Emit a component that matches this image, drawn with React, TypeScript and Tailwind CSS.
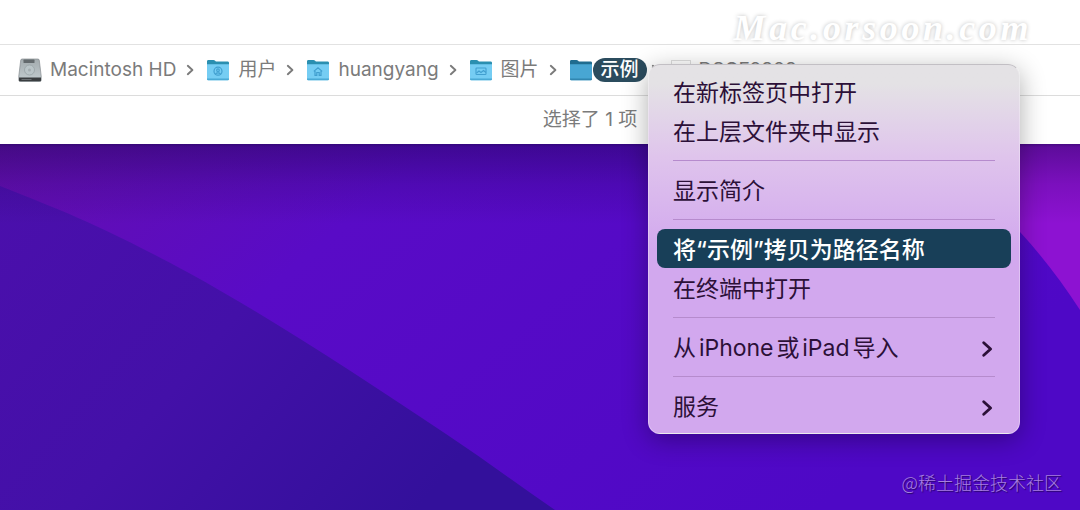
import { useId } from 'react';
import type { ReactNode } from 'react';

type FolderKind = 'users' | 'home' | 'pictures' | 'plain';

interface Crumb {
  label: string;
  icon: ReactNode;
  selected?: boolean;
}

interface MenuEntry {
  label: string;
  active?: boolean;
  submenu?: boolean;
}

function DriveIcon() {
  const id = useId();
  return (
    <svg width="24" height="24" viewBox="0 0 24 24" aria-hidden="true">
      <defs>
        <linearGradient id={id} x1="0" y1="0" x2="0" y2="1">
          <stop offset="0" stopColor="#a3abae" />
          <stop offset="1" stopColor="#c3cdd0" />
        </linearGradient>
      </defs>
      <path d="M4.200 1h15.600c.9 0 1.400.5 1.500 1.300L23.200 18v4.200c0 .8-.6 1.300-1.400 1.300H2.200C1.400 23.500.8 23 .8 22.200V18L2.700 2.300C2.800 1.500 3.300 1 4.200 1z" fill={`url(#${id})`} stroke="#868d90" strokeWidth=".7" />
      <path d="M1 19.600h22v2.600c0 .7-.4 1.100-1.100 1.100H2.100c-.7 0-1.100-.4-1.100-1.100z" fill="#3a3e40" />
      <rect x="5.500" y="1.600" width="11" height="3.400" rx=".6" fill="#636a6d" />
      <circle cx="11.500" cy="12" r="5" fill="#bac5c8" stroke="#98a3a6" strokeWidth=".8" />
      <circle cx="11.500" cy="12" r="1.500" fill="#a3adb0" />
      <path d="M3.500 21.500h10" stroke="#777e80" strokeWidth=".8" />
    </svg>
  );
}

function FolderIcon({ kind }: { kind: FolderKind }) {
  const plain = kind === 'plain';
  return (
    <svg width="24" height="24" viewBox="0 0 24 24" aria-hidden="true">
      <path d="M1 3.500C1 2.500 1.500 2 2.500 2h5c.6 0 1 .2 1.400.6l1 .9h11.600c1 0 1.500.5 1.500 1.500V8H1z" fill={plain ? '#1f6c8f' : '#2a8fb0'} />
      <path d="M1 6.300h22v14.500c0 .9-.5 1.400-1.400 1.400H2.400c-.9 0-1.400-.5-1.400-1.400z" fill={plain ? '#48a6d3' : '#75cdf3'} />
      <path d="M1 20.600h22v.3c0 .9-.5 1.400-1.400 1.400H2.400C1.500 22.300 1 21.800 1 20.900z" fill={plain ? '#3186b0' : '#4aaad5'} />
      {kind === 'users' && (
        <g fill="none" stroke="#419fcf" strokeWidth="1.200">
          <circle cx="12" cy="13.200" r="4" />
          <circle cx="12" cy="12.200" r="1.300" />
          <path d="M9.500 16c1-1.600 4-1.600 5 0" />
        </g>
      )}
      {kind === 'home' && (
        <path d="M7.800 13.400L12 9.800l4.200 3.600M9 13v4.300h1.800v-2.800h2.400v2.800H15V13" fill="none" stroke="#419fcf" strokeWidth="1.200" />
      )}
      {kind === 'pictures' && (
        <g fill="none" stroke="#419fcf" strokeWidth="1.100">
          <rect x="7" y="10" width="10" height="6.500" rx=".8" />
          <path d="M7.500 15l2.500-2 2 1.500 2.500-2 2.500 2" />
        </g>
      )}
    </svg>
  );
}

function Chevron({ className }: { className: string }) {
  return (
    <svg viewBox="0 0 8 12" className={className} fill="none" stroke="currentColor" strokeLinecap="round" strokeLinejoin="round" aria-hidden="true">
      <path d="M1.800 1.800L6.400 6l-4.600 4.200" strokeWidth="1.900" />
    </svg>
  );
}

const crumbs: Crumb[] = [
  { label: 'Macintosh HD', icon: <DriveIcon /> },
  { label: '用户', icon: <FolderIcon kind="users" /> },
  { label: 'huangyang', icon: <FolderIcon kind="home" /> },
  { label: '图片', icon: <FolderIcon kind="pictures" /> },
  { label: '示例', icon: <FolderIcon kind="plain" />, selected: true },
];

const menuGroups: MenuEntry[][] = [
  [{ label: '在新标签页中打开' }, { label: '在上层文件夹中显示' }],
  [{ label: '显示简介' }],
  [{ label: '将“示例”拷贝为路径名称', active: true }, { label: '在终端中打开' }],
  [{ label: '从iPhone或iPad导入', submenu: true }],
  [{ label: '服务', submenu: true }],
];

function PathBar() {
  return (
    <nav className="flex h-[51px] items-center whitespace-nowrap border-b border-[#dcdcdc] pl-[18px] text-[19px] leading-6 text-[#7b7b7b]">
      {crumbs.map((crumb) => (
        <div key={crumb.label} className="flex items-center">
          <a href="#" className={crumb.selected ? 'flex items-center' : 'flex items-center gap-2'}>
            {crumb.icon}
            {crumb.selected ? (
              <span className="rounded-full bg-[#2b4c5e] px-2 font-medium text-white">{crumb.label}</span>
            ) : (
              <span>{crumb.label}</span>
            )}
          </a>
          <Chevron className={crumb.selected ? 'mr-3 ml-1 h-3 w-2' : 'mr-3 ml-2.5 h-3 w-2'} />
        </div>
      ))}
      <a href="#" className="flex items-center gap-2">
        <span className="h-5 w-5 border border-[#dedede] bg-white" />
        <span>DSCF2808</span>
      </a>
    </nav>
  );
}

function ContextMenu() {
  return (
    <div
      role="menu"
      className="absolute top-16 left-[60%] w-[372px] rounded-xl border border-white/30 border-t-[#c2bfc4] bg-linear-to-b from-[#e4e2e5] from-5% via-[#dfc4ec] via-25% to-[#d2a8ee] to-50% px-2 pt-[7px] pb-2 text-[23px] text-[#2c1038] shadow-[0_6px_26px_rgba(0,0,0,0.32)]"
    >
      {menuGroups.map((group, i) => (
        <div key={i}>
          {i > 0 && (
            <div className="flex h-5 items-center px-4">
              <div className="h-px w-full bg-[#b68bcd]" />
            </div>
          )}
          {group.map((entry) => (
            <button
              key={entry.label}
              type="button"
              role="menuitem"
              className={`flex h-[39px] w-full items-center justify-between rounded-lg px-4 pt-1 text-left whitespace-nowrap [text-autospace:normal] ${
                entry.active ? 'bg-[#183f58] font-medium text-white' : ''
              }`}
            >
              {entry.label}
              {entry.submenu && <Chevron className="h-[18px] w-4" />}
            </button>
          ))}
        </div>
      ))}
    </div>
  );
}

// Fondo de escritorio
function Wallpaper() {
  return (
    <svg className="absolute inset-0 h-full w-full" viewBox="0 0 1080 366" preserveAspectRatio="none" aria-hidden="true">
      <defs>
        <linearGradient id="sky" x1="0" y1="0" x2="1" y2="0.4">
          <stop offset="0" stopColor="#640fae" />
          <stop offset="0.35" stopColor="#590bc6" />
          <stop offset="1" stopColor="#4e08c6" />
        </linearGradient>
        <linearGradient id="hill" x1="0" y1="0" x2="1" y2="0.5">
          <stop offset="0" stopColor="#4b0fac" />
          <stop offset="0.5" stopColor="#4310a8" />
          <stop offset="1" stopColor="#33109b" />
        </linearGradient>
        <linearGradient id="shade" x1="0" y1="0" x2="0" y2="1">
          <stop offset="0" stopColor="#1c0450" stopOpacity="0.62" />
          <stop offset="0.04" stopColor="#1c0450" stopOpacity="0.42" />
          <stop offset="0.5" stopColor="#1c0450" stopOpacity="0.16" />
          <stop offset="1" stopColor="#1c0450" stopOpacity="0" />
        </linearGradient>
      </defs>
      <rect width="1080" height="366" fill="url(#sky)" />
      <path d="M0 42C50 62 95 78 189 129C274 176 362 234 446 290C485 316 520 342 555 366H0z" fill="url(#hill)" />
      <path d="M880 0C930 10 980 45 1020 88C1042 112 1062 138 1080 166V0z" fill="#8d12d2" />
      <rect width="1080" height="80" fill="url(#shade)" />
    </svg>
  );
}

export default function App() {
  return (
    <div className="relative flex min-h-screen flex-col overflow-hidden bg-white font-[Inter,'Noto_Sans_CJK_SC',sans-serif]">
      <header className="flex h-[45px] items-center justify-end border-b border-[#e2e2e2] pr-12">
        <span className="pt-3 font-['Liberation_Serif',serif] text-[36px] leading-8 font-bold tracking-widest text-white italic [text-shadow:0_0_4px_rgba(0,0,0,0.25)]">
          Mac.orsoon.com
        </span>
      </header>
      <PathBar />
      <div className="flex h-12 items-center justify-center pl-[100px]">
        <p className="text-[19px] text-[#7b7b7b]">选择了 1 项</p>
      </div>
      <main className="relative flex flex-1 items-end justify-end">
        <Wallpaper />
        <p className="relative pr-[18px] pb-4 font-['Noto_Sans_CJK_SC',sans-serif] text-[18px] leading-6 font-light text-[#a77fe0] [text-shadow:1px_1px_1px_rgba(0,0,0,0.5)]">
          @稀土掘金技术社区
        </p>
      </main>
      <ContextMenu />
    </div>
  );
}
